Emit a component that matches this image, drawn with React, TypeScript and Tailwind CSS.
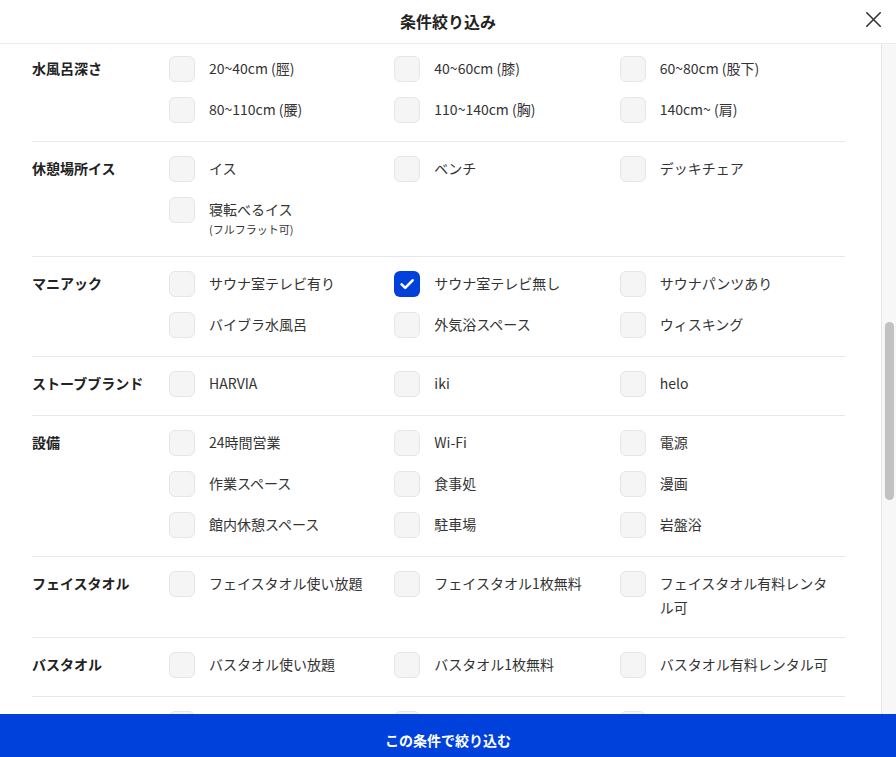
import React from 'react';

type Option = {
    label: string;
    note?: string;
    checked?: boolean;
};

type Group = {
    title: string;
    options: Option[];
};

const groups: Group[] = [
    {
        title: '水風呂深さ',
        options: [
            { label: '20~40cm (脛)' },
            { label: '40~60cm (膝)' },
            { label: '60~80cm (股下)' },
            { label: '80~110cm (腰)' },
            { label: '110~140cm (胸)' },
            { label: '140cm~ (肩)' },
        ],
    },
    {
        title: '休憩場所イス',
        options: [
            { label: 'イス' },
            { label: 'ベンチ' },
            { label: 'デッキチェア' },
            { label: '寝転べるイス', note: '(フルフラット可)' },
        ],
    },
    {
        title: 'マニアック',
        options: [
            { label: 'サウナ室テレビ有り' },
            { label: 'サウナ室テレビ無し', checked: true },
            { label: 'サウナパンツあり' },
            { label: 'バイブラ水風呂' },
            { label: '外気浴スペース' },
            { label: 'ウィスキング' },
        ],
    },
    {
        title: 'ストーブブランド',
        options: [{ label: 'HARVIA' }, { label: 'iki' }, { label: 'helo' }],
    },
    {
        title: '設備',
        options: [
            { label: '24時間営業' },
            { label: 'Wi-Fi' },
            { label: '電源' },
            { label: '作業スペース' },
            { label: '食事処' },
            { label: '漫画' },
            { label: '館内休憩スペース' },
            { label: '駐車場' },
            { label: '岩盤浴' },
        ],
    },
    {
        title: 'フェイスタオル',
        options: [
            { label: 'フェイスタオル使い放題' },
            { label: 'フェイスタオル1枚無料' },
            { label: 'フェイスタオル有料レンタル可' },
        ],
    },
    {
        title: 'バスタオル',
        options: [
            { label: 'バスタオル使い放題' },
            { label: 'バスタオル1枚無料' },
            { label: 'バスタオル有料レンタル可' },
        ],
    },
];

const Checkbox: React.FC<{ checked?: boolean }> = ({ checked }) =>
    checked ? (
        <span className="flex h-[26px] w-[26px] shrink-0 items-center justify-center rounded-[6px] bg-[#0041dc]">
            <svg width="26" height="26" viewBox="0 0 26 26" fill="none">
                <path d="M7.6 13.4l3.6 3.5 7.4-7.6" stroke="#fff" strokeWidth="2.6" strokeLinecap="round" strokeLinejoin="round" />
            </svg>
        </span>
    ) : (
        <span className="h-[26px] w-[26px] shrink-0 rounded-[6px] border border-[#e6e6e6] bg-[#f5f5f5]" />
    );

const FilterGroup: React.FC<{ group: Group; first?: boolean }> = ({ group, first }) => (
    <div className={`flex border-b border-[#e8e8e8] pb-[18px] ${first ? 'pt-3' : 'pt-[14px]'}`}>
        <div className="w-[137px] shrink-0 text-sm font-bold leading-6 text-[#222]">{group.title}</div>
        <div className="grid flex-1 grid-cols-3 gap-y-[15px]">
            {group.options.map((opt) => (
                <label key={opt.label} className="flex items-start gap-[14px] pr-3">
                    <Checkbox checked={opt.checked} />
                    <div className="min-w-0 text-[#333]">
                        <div className="text-sm leading-6">{opt.label}</div>
                        {opt.note && <div className="text-[11px] leading-[17px]">{opt.note}</div>}
                    </div>
                </label>
            ))}
        </div>
    </div>
);

export default function App() {
    return (
        <div
            className="flex h-[757px] w-[896px] flex-col overflow-hidden bg-white"
            style={{ fontFamily: '"Noto Sans CJK JP", "Noto Sans", sans-serif' }}
        >
            {/* header */}
            <div className="grid h-[44px] shrink-0 grid-cols-[1fr_auto_1fr] items-center border-b border-[#ebebeb]">
                <div />
                <div className="pb-[2px] text-base font-bold text-[#222]">条件絞り込み</div>
                <div className="flex justify-end pr-[15px]">
                    <svg width="15" height="15" viewBox="0 0 15 15" fill="none" className="-mt-[5px]">
                        <path d="M0.8 0.8l13.4 13.4M14.2 0.8L0.8 14.2" stroke="#333" strokeWidth="1.6" strokeLinecap="round" />
                    </svg>
                </div>
            </div>

            {/* list + scrollbar */}
            <div className="flex min-h-0 flex-1">
                <div className="min-w-0 flex-1 overflow-hidden pl-8 pr-9">
                    {groups.map((g, i) => (
                        <FilterGroup key={g.title} group={g} first={i === 0} />
                    ))}
                    {/* next group, scrolled under the footer */}
                    <div className="flex pt-[14px]">
                        <div className="w-[137px] shrink-0" />
                        <div className="grid flex-1 grid-cols-3">
                            <Checkbox />
                            <Checkbox />
                            <Checkbox />
                        </div>
                    </div>
                </div>
                <div className="w-[15px] shrink-0 border-l border-[#e5e5e5] bg-[#f7f7f7]">
                    <div className="mx-auto mt-[278px] h-[178px] w-[9px] rounded-full bg-[#c1c1c1]" />
                </div>
            </div>

            {/* submit */}
            <button className="flex h-[43px] shrink-0 justify-center bg-[#0041dc] pt-[15px] text-sm font-bold leading-[22px] text-white">
                この条件で絞り込む
            </button>
        </div>
    );
}
